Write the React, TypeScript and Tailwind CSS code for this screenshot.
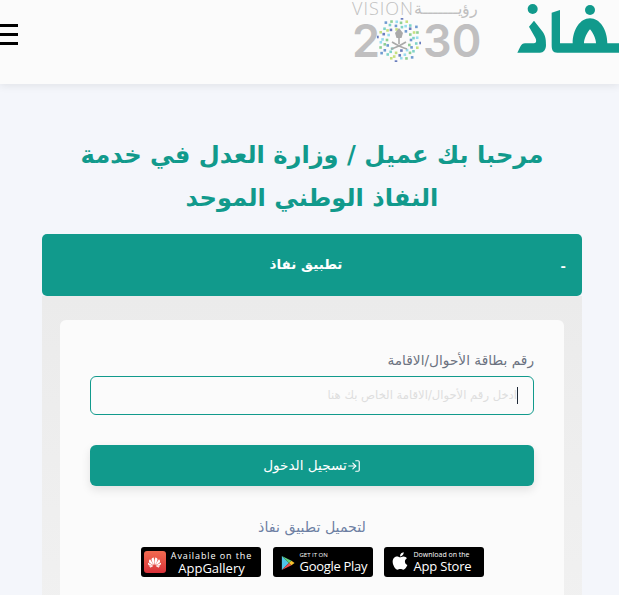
import { FaApple } from "react-icons/fa";
import { SiHuawei } from "react-icons/si";
import { LogIn } from "lucide-react";

const font = { fontFamily: '"DejaVu Sans", sans-serif' };

function NafathLogo() {
  return (
    <svg width="109" height="60" viewBox="0 0 327 180" className="shrink-0 block">
      <g fill="#119a8c">
        <circle cx="68" cy="27" r="15" />
        <circle cx="240" cy="30" r="15" />
        <path d="M22 158 C30 145 32 130 45 130 H72 C80 130 80 120 75 112 L57 80 L72 62 L98 95 C108 108 108 125 108 135 C108 150 100 158 90 158 Z" />
        <path fillRule="evenodd" d="M125 38 L150 30 V130 H188 C188 90 210 55 240 55 C270 55 292 90 292 130 H327 V158 H142 C128 158 125 150 125 135 Z M222 130 H258 C258 115 248 97 240 88 C232 97 222 115 222 130 Z" />
      </g>
    </svg>
  );
}

function Emblem() {
  const cols = ["#6f9bd0", "#7fd3c8", "#c6e07f", "#6a7dbd", "#98dcef", "#8fd093"];
  const dots: { x: number; y: number; c: string }[] = [];
  [12, 16, 20].forEach((r, i) => {
    const n = 14 + i * 5;
    for (let k = 0; k < n; k++) {
      const a = (k / n) * Math.PI * 2 + i * 0.2;
      const rr = r * (1 + 0.1 * Math.cos(8 * a - Math.PI / 2));
      dots.push({ x: 22 + Math.cos(a) * rr, y: 22 + Math.sin(a) * rr, c: cols[(k * 5 + i) % 6] });
    }
  });
  return (
    <svg width="44" height="44" viewBox="0 0 44 44" className="shrink-0 mx-[-2px]">
      {dots.map((d, i) => (
        <rect key={i} x={d.x - 1.3} y={d.y - 1.3} width="2.6" height="2.6" fill={d.c} />
      ))}
      <path d="M18 15 L22 10 L26 15 L24.5 20 H19.5 Z" fill="#a9a9a9" />
      <path d="M22 19 V26 M14 31 C18 30 24 27 29 24 M15 24 C20 27 26 30 30 31" stroke="#a9a9a9" strokeWidth="1.6" fill="none" />
    </svg>
  );
}

function Vision() {
  return (
    <div className="flex flex-col w-[128px] shrink-0 mr-[30px] text-[#c0bfc0]">
      <div className="flex items-center justify-between h-[17px]">
        <span className="text-[18px] font-light leading-[17px] tracking-[1px]" style={{ fontFamily: '"Open Sans", sans-serif' }}>VISION</span>
        <span dir="rtl" className="text-[16px] font-extralight leading-[17px] whitespace-nowrap mr-[3px]">رؤيـــــــة</span>
      </div>
      <div className="flex items-center h-[44px] mt-[1px]" style={{ fontFamily: "Inter, sans-serif" }}>
        <span className="text-[45px] font-semibold leading-none w-[27px]">2</span>
        <Emblem />
        <span className="text-[45px] font-semibold leading-none ml-[4px] whitespace-nowrap">30</span>
      </div>
    </div>
  );
}

function Badge({ w, children }: { w: string; children: React.ReactNode }) {
  return <div className={`${w} h-[30px] bg-black rounded-[3px] flex items-center text-white shrink-0`}>{children}</div>;
}

export default function App() {
  return (
    <div dir="ltr" className="w-[619px] h-[595px] overflow-hidden bg-[#f4f6fb]" style={font}>
      <header className="relative h-[84px] bg-[#fbfbfb] flex items-start justify-between overflow-hidden shadow-[0_2px_8px_rgba(0,0,0,0.08)]">
        <div className="flex flex-col gap-[6px] w-[18px] mt-[24px]">
          <span className="h-[3px] bg-black block" />
          <span className="h-[3px] bg-black block" />
          <span className="h-[3px] bg-black block" />
        </div>
        <div className="flex items-start">
          <Vision />
          <NafathLogo />
        </div>
      </header>

      <main dir="rtl" className="flex flex-col items-center pl-[42px] pr-[37px] pt-[50px]">
        <h1 className="text-[24.2px] font-bold leading-[43px] text-[#119a8c] text-center w-[500px]">
          مرحبا بك عميل / وزارة العدل في خدمة النفاذ الوطني الموحد
        </h1>

        <section className="w-[540px] mt-[14px]">
          <div className="h-[62px] bg-[#119a8c] rounded-[5px] flex items-center justify-between px-[16px] text-white">
            <span className="text-[13px] font-bold w-[8px] mt-[4px]">-</span>
            <span className="text-[13.5px] font-bold mb-[2px] mr-[12px]">تطبيق نفاذ</span>
            <span className="w-[8px]" />
          </div>
          <div className="bg-gradient-to-b from-[#ebebeb] to-[#f1f1f1] px-[18px] pt-[24px]">
            <div className="bg-[#fbfbfb] rounded-t-[6px] px-[30px] pt-[31px] h-[300px]">
              <label className="block text-[13.7px] font-normal leading-[18px] text-[#6b7280]">رقم بطاقة الأحوال/الاقامة</label>
              <div className="relative mt-[7px] h-[39px] border border-[#119a8c] rounded-[6px] flex items-center pr-[16px] overflow-hidden">
                <span className="text-[11.6px] text-[#dedede]">ادخل رقم الأحوال/الاقامة الخاص بك هنا</span>
                <span className="absolute right-[15px] top-[10px] w-px h-[17px] bg-[#1f2937]" />
              </div>
              <button className="mt-[30px] w-full h-[41px] bg-[#119a8c] rounded-[6px] text-white text-[13.6px] flex items-center justify-center shadow-[0_4px_10px_rgba(0,0,0,0.1)]">
                <LogIn size={14} strokeWidth={2} />
                <span>تسجيل الدخول</span>
              </button>
              <p className="mt-[31px] text-center text-[14.2px] leading-[20px] text-[#6d7fa3]">لتحميل تطبيق نفاذ</p>
              <div dir="ltr" className="mt-[10px] flex justify-center gap-[11px]" style={{ fontFamily: '"Open Sans", sans-serif' }}>
                <Badge w="w-[120px] mr-[1px]">
                  <span className="ml-[3px] w-[22px] h-[22px] rounded-[3px] bg-gradient-to-b from-[#f26a50] to-[#d9303a] flex items-center justify-center shrink-0">
                    <SiHuawei size={13} color="#fff" />
                  </span>
                  <span className="flex flex-col items-center flex-1 leading-none pr-[3px]">
                    <span className="text-[9px] leading-[11px] tracking-[0.9px] whitespace-nowrap">Available on the</span>
                    <span className="text-[13px] leading-[14px] whitespace-nowrap">AppGallery</span>
                  </span>
                </Badge>
                <Badge w="w-[100px]">
                  <svg width="14" height="16" viewBox="0 0 16 18" className="ml-[8px] shrink-0 mt-[2px]">
                    <path d="M1 1 L9 9 L1 17 Z" fill="#4fc3e8" />
                    <path d="M1 1 L12 6.5 L9 9 Z" fill="#5fcf7a" />
                    <path d="M1 17 L12 11.5 L9 9 Z" fill="#ea4d4d" />
                    <path d="M12 6.5 L15.5 9 L12 11.5 L9 9 Z" fill="#f7c22d" />
                  </svg>
                  <span className="flex flex-col ml-[5px]">
                    <span className="text-[6px] leading-[8px] whitespace-nowrap">GET IT ON</span>
                    <span className="text-[13px] leading-[15px] whitespace-nowrap tracking-[-0.3px]">Google Play</span>
                  </span>
                </Badge>
                <Badge w="w-[100px]">
                  <FaApple size={20} className="ml-[6px] shrink-0 mb-[2px]" />
                  <span className="flex flex-col ml-[4px]">
                    <span className="text-[7px] leading-[9px] whitespace-nowrap">Download on the</span>
                    <span className="text-[13px] leading-[15px] whitespace-nowrap tracking-[-0.2px]">App Store</span>
                  </span>
                </Badge>
              </div>
            </div>
          </div>
        </section>
      </main>
    </div>
  );
}
